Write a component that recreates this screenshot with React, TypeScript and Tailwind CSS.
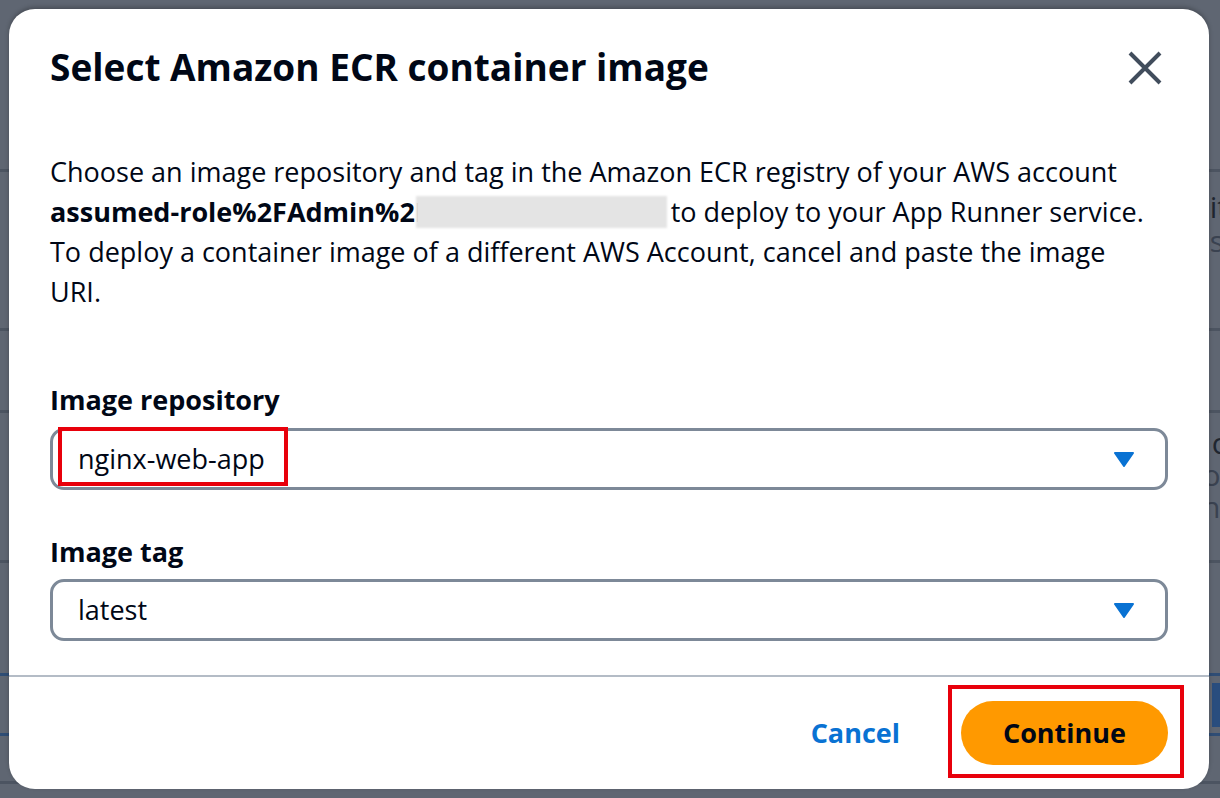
import React from "react";

const font = { fontFamily: '"Open Sans", "Noto Sans", "Liberation Sans", sans-serif' };

function Caret() {
  return (
    <svg width="22" height="16" viewBox="0 0 22 16" className="shrink-0">
      <path d="M2 2 L20 2 L11 15 Z" fill="#0972d3" stroke="#0972d3" strokeWidth="2" strokeLinejoin="round" />
    </svg>
  );
}

function Select({ value, highlight }: { value: string; highlight?: boolean }) {
  return (
    <div className="relative flex h-[62px] items-center justify-between rounded-[14px] border-[3px] border-[#7d8998] bg-white pl-[25px] pr-[30px]">
      <span className="text-[27px] leading-[40px] text-[#000716]">{value}</span>
      <Caret />
      {highlight && (
        <div className="pointer-events-none absolute left-[5px] top-[-4px] h-[59px] w-[230px] border-[4px] border-[#e8000b]" />
      )}
    </div>
  );
}

export default function App() {
  return (
    <div className="relative h-[798px] w-[1220px] overflow-hidden bg-[#5f6672]" style={font}>
      {/* dimmed page behind the modal */}
      <div className="flex flex-col text-[30px] text-[#1f2630]">
        <div className="h-[172px] border-b-[3px] border-[#4c5461]" />
        <div className="flex h-[156px] flex-col items-end pt-[18px] leading-[34px]">
          <span className="mr-[-8px]">it</span>
          <span className="mr-[-4px] text-[#3a4250]">s</span>
        </div>
        <div className="h-[82px] border-t-[3px] border-[#4c5461]" />
        <div className="flex h-[150px] flex-col items-end border-t-[3px] border-[#4c5461] pt-[14px] leading-[32px]">
          <span className="mr-[-6px]">c</span>
          <span className="mr-[-8px] text-[#3a4250]">ol</span>
          <span className="mr-[-8px] text-[#3a4250]">ni</span>
        </div>
        <div className="h-[113px] border-t-[3px] border-[#4c5461]" />
        <div className="flex h-[60px] items-center justify-end border-t-[3px] border-[#2f4d75]">
          <div className="mr-[-20px] h-[44px] w-[28px] bg-[#294d7e]" />
        </div>
        <div className="h-[48px] border-t-[3px] border-[#2f4d75]" />
        <div className="h-[3px] bg-[#4c5461]" />
      </div>

      {/* modal */}
      <div className="absolute left-[9px] top-[9px] flex h-[780px] w-[1200px] flex-col rounded-[26px] bg-white shadow-[0_-2px_4px_rgba(0,0,0,0.25)]">
        <div className="flex items-start justify-between pl-[41px] pr-[45px] pt-[34px]">
          <h1 className="whitespace-nowrap text-[37px] font-bold leading-[48px] text-[#000716]">
            Select Amazon ECR container image
          </h1>
          <svg width="38" height="38" viewBox="0 0 38 38" className="mt-[6px]">
            <path d="M4 4 L34 34 M34 4 L4 34" stroke="#414d5c" strokeWidth="4" strokeLinecap="butt" />
          </svg>
        </div>

        <div className="px-[41px] pt-[61px]">
          <div className="text-[27px] leading-[40px] text-[#000716]">
            <div className="whitespace-nowrap">
              Choose an image repository and tag in the Amazon ECR registry of your AWS account
            </div>
            <div className="flex items-center whitespace-nowrap">
              <span className="font-bold">assumed-role%2FAdmin%2F</span>
              <span className="relative ml-[-14px] mr-[4px] inline-block h-[32px] w-[251px] bg-[#e4e4e4] blur-[1px]" />
              <span>to deploy to your App Runner service.</span>
            </div>
            <div className="whitespace-nowrap">
              To deploy a container image of a different AWS Account, cancel and paste the image
            </div>
            <div>URI.</div>
          </div>

          <div className="mt-[68px] text-[27px] font-bold leading-[40px] text-[#000716]">Image repository</div>
          <div className="mt-[8px]">
            <Select value="nginx-web-app" highlight />
          </div>

          <div className="mt-[42px] text-[27px] font-bold leading-[40px] text-[#000716]">Image tag</div>
          <div className="mt-[7px]">
            <Select value="latest" />
          </div>
        </div>

        <div className="mt-[34px] border-t-[2px] border-[#b4bcc6]" />

        <div className="flex flex-1 items-start justify-end pr-[41px] pt-[24px]">
          <button className="mr-[61px] mt-[12px] text-[27px] font-bold leading-[40px] text-[#0972d3]">Cancel</button>
          <div className="relative">
            <button className="h-[64px] w-[207px] rounded-full bg-[#ff9900] text-[27px] font-bold text-[#000716]">
              Continue
            </button>
            <div className="pointer-events-none absolute left-[-13px] top-[-16px] h-[93px] w-[236px] border-[4px] border-[#e8000b]" />
          </div>
        </div>
      </div>
    </div>
  );
}
